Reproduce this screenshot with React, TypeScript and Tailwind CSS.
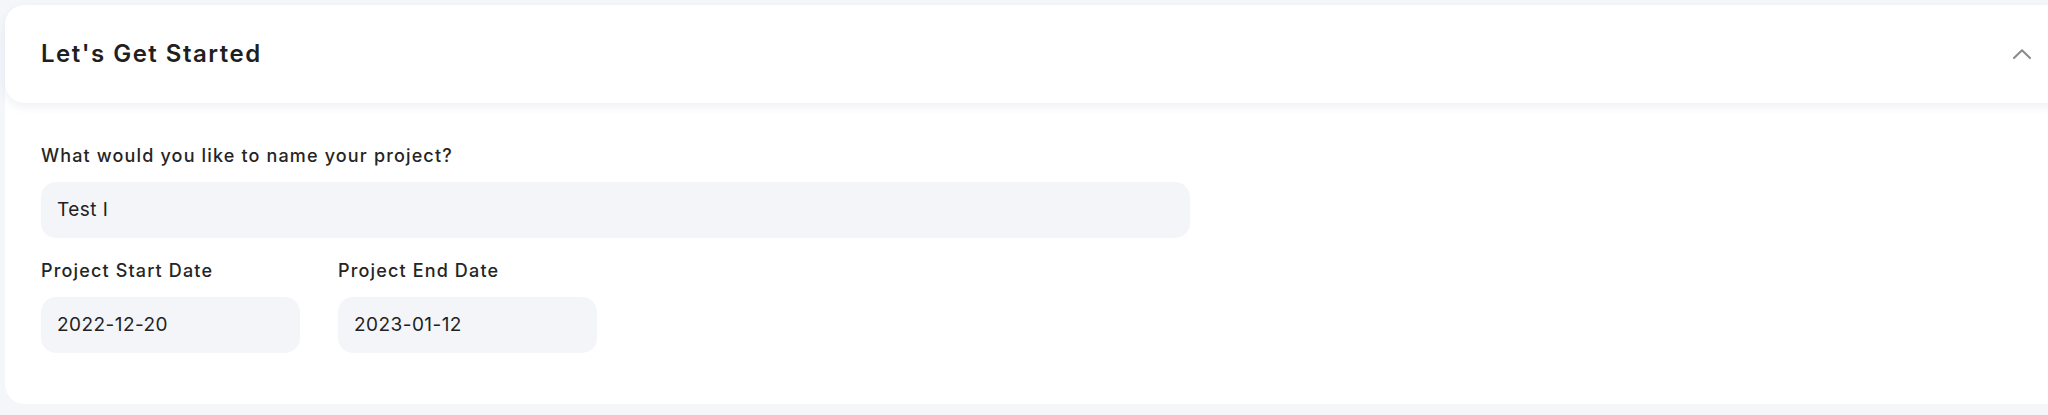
import React from "react";

function ChevronUp() {
  return (
    <svg width="18" height="10" viewBox="0 0 18 10" fill="none">
      <polyline points="1,9 9,1.2 17,9" stroke="#8a8a8a" strokeWidth="2" strokeLinecap="round" strokeLinejoin="round" />
    </svg>
  );
}

function Field({ label, value, widthClass }: { label: string; value: string; widthClass: string }) {
  return (
    <div className="flex flex-col">
      <label className="text-[18px] leading-[24px] font-medium text-[#252525] tracking-[1.15px]">{label}</label>
      <div className={`mt-[14px] h-[56px] ${widthClass} rounded-[15px] bg-[#f4f5f9] flex items-center px-[16px] text-[19px] text-[#222] tracking-[0.45px]`}>
        {value}
      </div>
    </div>
  );
}

export default function App() {
  return (
    <div
      className="min-h-screen w-full overflow-hidden bg-[#f5f6fa] pl-[5px] pt-[5px] pb-[12px]"
      style={{ fontFamily: "Inter, 'Noto Sans', sans-serif" }}
    >
      <div className="w-[calc(100%+20px)] rounded-[20px] bg-white">
        <div className="h-[98px] rounded-[20px] bg-white shadow-[0_4px_10px_rgba(30,40,80,0.07)] flex items-center justify-between pl-[36px] pr-[37px] relative z-10">
          <h2 className="text-[24px] font-semibold text-[#1f1f1f] tracking-[1.5px]">Let's Get Started</h2>
          <ChevronUp />
        </div>
        <div className="pl-[36px] pt-[41px] pb-[51px] flex flex-col gap-[21px]">
          <Field label="What would you like to name your project?" value="Test I" widthClass="w-[1149px]" />
          <div className="flex gap-[38px]">
            <Field label="Project Start Date" value="2022-12-20" widthClass="w-[259px]" />
            <Field label="Project End Date" value="2023-01-12" widthClass="w-[259px]" />
          </div>
        </div>
      </div>
    </div>
  );
}
